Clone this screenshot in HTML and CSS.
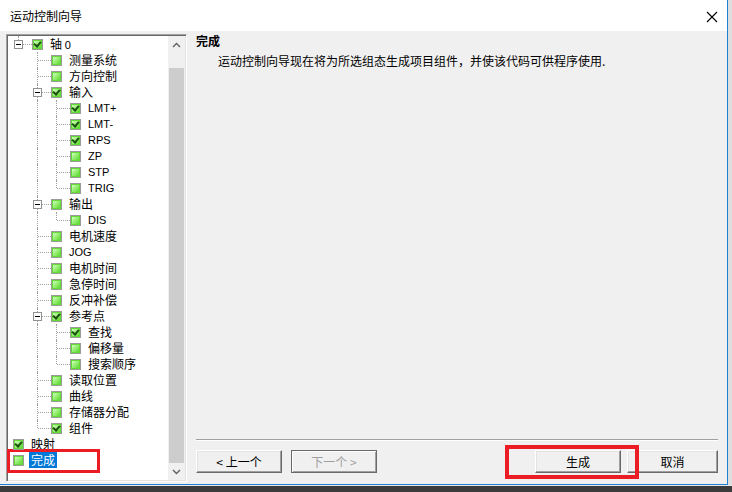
FILE: index.html
```html
<!DOCTYPE html>
<html lang="zh-CN">
<head>
  <meta charset="UTF-8" />
  <title>运动控制向导</title>
  <link rel="stylesheet" href="styles.css">
</head>
<body>
  <div class="screen">
    <div class="top">
      <div class="window">
        <div class="titlebar">
          <span class="title">运动控制向导</span>
          <svg class="close" width="12" height="12" viewBox="0 0 12 12"><path d="M1 1 L11 11 M11 1 L1 11" stroke="#000" stroke-width="1.1" fill="none"/></svg>
        </div>
        <div class="client">
          <div class="tree">
            <div class="list">
              <div class="row"><span class="g exp-root"><i class="box"></i></span><span class="cb on"></span><span class="lbl">轴 <span class="lat">0</span></span></div>
              <div class="row"><span class="g"></span><span class="g tee"></span><span class="cb"></span><span class="lbl">测量系统</span></div>
              <div class="row"><span class="g"></span><span class="g tee"></span><span class="cb"></span><span class="lbl">方向控制</span></div>
              <div class="row"><span class="g"></span><span class="g exp-mid"><i class="box"></i></span><span class="cb on"></span><span class="lbl">输入</span></div>
              <div class="row"><span class="g"></span><span class="g line"></span><span class="g tee"></span><span class="cb on"></span><span class="lbl lat">LMT+</span></div>
              <div class="row"><span class="g"></span><span class="g line"></span><span class="g tee"></span><span class="cb on"></span><span class="lbl lat">LMT-</span></div>
              <div class="row"><span class="g"></span><span class="g line"></span><span class="g tee"></span><span class="cb on"></span><span class="lbl lat">RPS</span></div>
              <div class="row"><span class="g"></span><span class="g line"></span><span class="g tee"></span><span class="cb"></span><span class="lbl lat">ZP</span></div>
              <div class="row"><span class="g"></span><span class="g line"></span><span class="g tee"></span><span class="cb"></span><span class="lbl lat">STP</span></div>
              <div class="row"><span class="g"></span><span class="g line"></span><span class="g end"></span><span class="cb"></span><span class="lbl lat">TRIG</span></div>
              <div class="row"><span class="g"></span><span class="g exp-mid"><i class="box"></i></span><span class="cb"></span><span class="lbl">输出</span></div>
              <div class="row"><span class="g"></span><span class="g line"></span><span class="g end"></span><span class="cb"></span><span class="lbl lat">DIS</span></div>
              <div class="row"><span class="g"></span><span class="g tee"></span><span class="cb"></span><span class="lbl">电机速度</span></div>
              <div class="row"><span class="g"></span><span class="g tee"></span><span class="cb"></span><span class="lbl lat">JOG</span></div>
              <div class="row"><span class="g"></span><span class="g tee"></span><span class="cb"></span><span class="lbl">电机时间</span></div>
              <div class="row"><span class="g"></span><span class="g tee"></span><span class="cb"></span><span class="lbl">急停时间</span></div>
              <div class="row"><span class="g"></span><span class="g tee"></span><span class="cb"></span><span class="lbl">反冲补偿</span></div>
              <div class="row"><span class="g"></span><span class="g exp-mid"><i class="box"></i></span><span class="cb on"></span><span class="lbl">参考点</span></div>
              <div class="row"><span class="g"></span><span class="g line"></span><span class="g tee"></span><span class="cb on"></span><span class="lbl">查找</span></div>
              <div class="row"><span class="g"></span><span class="g line"></span><span class="g tee"></span><span class="cb"></span><span class="lbl">偏移量</span></div>
              <div class="row"><span class="g"></span><span class="g line"></span><span class="g end"></span><span class="cb"></span><span class="lbl">搜索顺序</span></div>
              <div class="row"><span class="g"></span><span class="g tee"></span><span class="cb"></span><span class="lbl">读取位置</span></div>
              <div class="row"><span class="g"></span><span class="g tee"></span><span class="cb"></span><span class="lbl">曲线</span></div>
              <div class="row"><span class="g"></span><span class="g tee"></span><span class="cb"></span><span class="lbl">存储器分配</span></div>
              <div class="row"><span class="g"></span><span class="g end"></span><span class="cb on"></span><span class="lbl">组件</span></div>
              <div class="row"><span class="cb on"></span><span class="lbl">映射</span></div>
              <div class="row"><span class="cb"></span><span class="lbl selected">完成</span></div>
            </div>
            <div class="scrollbar">
              <div class="sb-btn">
                <svg width="9" height="6" viewBox="0 0 9 6"><path d="M1 5 L4.5 1.5 L8 5" stroke="#606060" stroke-width="1.4" fill="none"/></svg>
              </div>
              <div class="sb-track"><div class="sb-thumb"></div></div>
              <div class="sb-btn">
                <svg width="9" height="6" viewBox="0 0 9 6"><path d="M1 1 L4.5 4.5 L8 1" stroke="#606060" stroke-width="1.4" fill="none"/></svg>
              </div>
            </div>
          </div>

          <div class="panel">
            <div class="heading">完成</div>
            <div class="desc">运动控制向导现在将为所选组态生成项目组件，并使该代码可供程序使用.</div>
            <div class="separator"></div>
            <div class="buttons">
              <button class="btn">&lt; 上一个</button>
              <button class="btn disabled">下一个 &gt;</button>
              <span class="spacer"></span>
              <button class="btn">生成</button>
              <button class="btn wide">取消</button>
            </div>
          </div>
        </div>
      </div>
      <div class="shadow"></div>
    </div>
    <div class="taskbar"></div>

    <div class="mark mark-gen"></div>
    <div class="mark mark-item"></div>
  </div>
</body>
</html>
```

FILE: styles.css
```css
body {
  margin: 0;
  font-family: "Noto Sans CJK SC", "Microsoft YaHei", sans-serif;
  font-size: 12px;
  color: #000;
}
.screen {
  position: relative;
  width: 732px;
  height: 492px;
  overflow: hidden;
  display: flex;
  flex-direction: column;
}
.top {
  display: flex;
  height: 485px;
}
.window {
  width: 727px;
  border-right: 1px solid #1f7fd6;
  border-bottom: 1px solid #1f7fd6;
  display: flex;
  flex-direction: column;
  background: #f0f0f0;
}
.shadow {
  flex: 1;
  background: #dedede;
}
.taskbar {
  flex: 1;
  background: #3c3c3c;
  border-top: 1px solid #eaeaea;
}

/* title bar */
.titlebar {
  height: 31px;
  background: #fff;
  display: flex;
  align-items: center;
  padding: 0 10px;
}
.title {
  flex: 1;
  line-height: 16px;
  margin-top: 1px;
}
.close {
  margin-right: -1px;
  margin-top: 3px;
}

/* client */
.client {
  flex: 1;
  display: flex;
  padding: 3px 0 2px 6px;
}

/* tree */
.tree {
  width: 177px;
  display: flex;
  border: 1px solid;
  border-color: #a0a0a0 #fff #fff #a0a0a0;
  box-shadow: inset 1px 1px #696969, inset -1px -1px #e3e3e3;
  background: #fff;
  padding: 1px;
}
.list {
  flex: 1;
  padding-left: 1px;
  background: #fff;
}
.row {
  display: flex;
  height: 16px;
  align-items: center;
}
.g {
  position: relative;
  width: 19px;
  height: 16px;
  flex: none;
}
.line::before,
.tee::before,
.end::before,
.exp-mid::before,
.exp-root::before {
  content: '';
  position: absolute;
  left: 9px;
  top: 0;
  height: 16px;
  border-left: 1px dotted #a0a0a0;
}
.end::before {
  height: 8px;
}
.exp-root::before {
  height: 4px;
}
.tee::after,
.end::after,
.exp-mid::after,
.exp-root::after {
  content: '';
  position: absolute;
  left: 10px;
  top: 8px;
  width: 13px;
  border-top: 1px dotted #a0a0a0;
}
.box {
  position: absolute;
  z-index: 1;
  left: 5px;
  top: 4px;
  width: 7px;
  height: 7px;
  border: 1px solid #919191;
  background: #fff;
}
.box::after {
  content: '';
  position: absolute;
  left: 1px;
  top: 3px;
  width: 5px;
  height: 1px;
  background: #000;
}
.cb {
  position: relative;
  z-index: 1;
  flex: none;
  width: 9px;
  height: 9px;
  margin: 0 4px;
  border: 1px solid #9a9a9a;
  background: linear-gradient(135deg, #eaffe0 0%, #a4f284 40%, #4ed31f 100%);
  box-shadow: inset 0 0 0 1px #62dc34;
}
.cb.on::after {
  content: '';
  position: absolute;
  left: 2px;
  top: 0;
  width: 3px;
  height: 5px;
  border-right: 2px solid #1d4f12;
  border-bottom: 2px solid #1d4f12;
  transform: rotate(40deg);
}
.lbl {
  margin-left: 1px;
  padding: 0 2px;
  line-height: 16px;
  white-space: nowrap;
}
.lat {
  font-family: "Liberation Sans", Arial, sans-serif;
  font-size: 11px;
}
.selected {
  background: #0078d7;
  color: #fff;
}

/* scrollbar */
.scrollbar {
  width: 17px;
  display: flex;
  flex-direction: column;
  background: #f0f0f0;
}
.sb-btn {
  height: 17px;
  display: flex;
  align-items: center;
  justify-content: center;
}
.sb-track {
  flex: 1;
  padding-top: 15px;
  display: flex;
  flex-direction: column;
}
.sb-thumb {
  flex: 1;
  margin: 0 1px;
  background: #cdcdcd;
}

/* right panel */
.panel {
  flex: 1;
  display: flex;
  flex-direction: column;
  padding: 0 9px 9px 9px;
}
.heading {
  font-weight: bold;
  line-height: 14px;
}
.desc {
  margin-top: 6px;
  padding-left: 22px;
  line-height: 14px;
}
.separator {
  margin-top: auto;
  border-top: 1px solid #a0a0a0;
  border-bottom: 1px solid #fff;
}
.buttons {
  display: flex;
  margin-top: 9px;
  gap: 9px;
}
.spacer {
  flex: 1;
}
.btn {
  width: 86px;
  height: 23px;
  padding: 0;
  font: inherit;
  color: #000;
  background: #f0f0f0;
  border: 1px solid;
  border-color: #fff #696969 #696969 #fff;
  box-shadow: inset -1px -1px #a0a0a0, inset 1px 1px #e3e3e3;
}
.btn.wide {
  width: 91px;
  margin-left: -3px;
}
.btn.disabled {
  color: #a0a0a0;
  border-color: #696969;
  box-shadow: inset 1px 1px #fff, inset -1px -1px #a0a0a0;
}

/* red annotation boxes */
.mark {
  position: absolute;
  border: 4px solid #ec1c24;
}
.mark-gen {
  left: 505px;
  top: 445px;
  width: 126px;
  height: 26px;
}
.mark-item {
  left: 7px;
  top: 449px;
  width: 87px;
  height: 18px;
  border-width: 3px;
}
```
